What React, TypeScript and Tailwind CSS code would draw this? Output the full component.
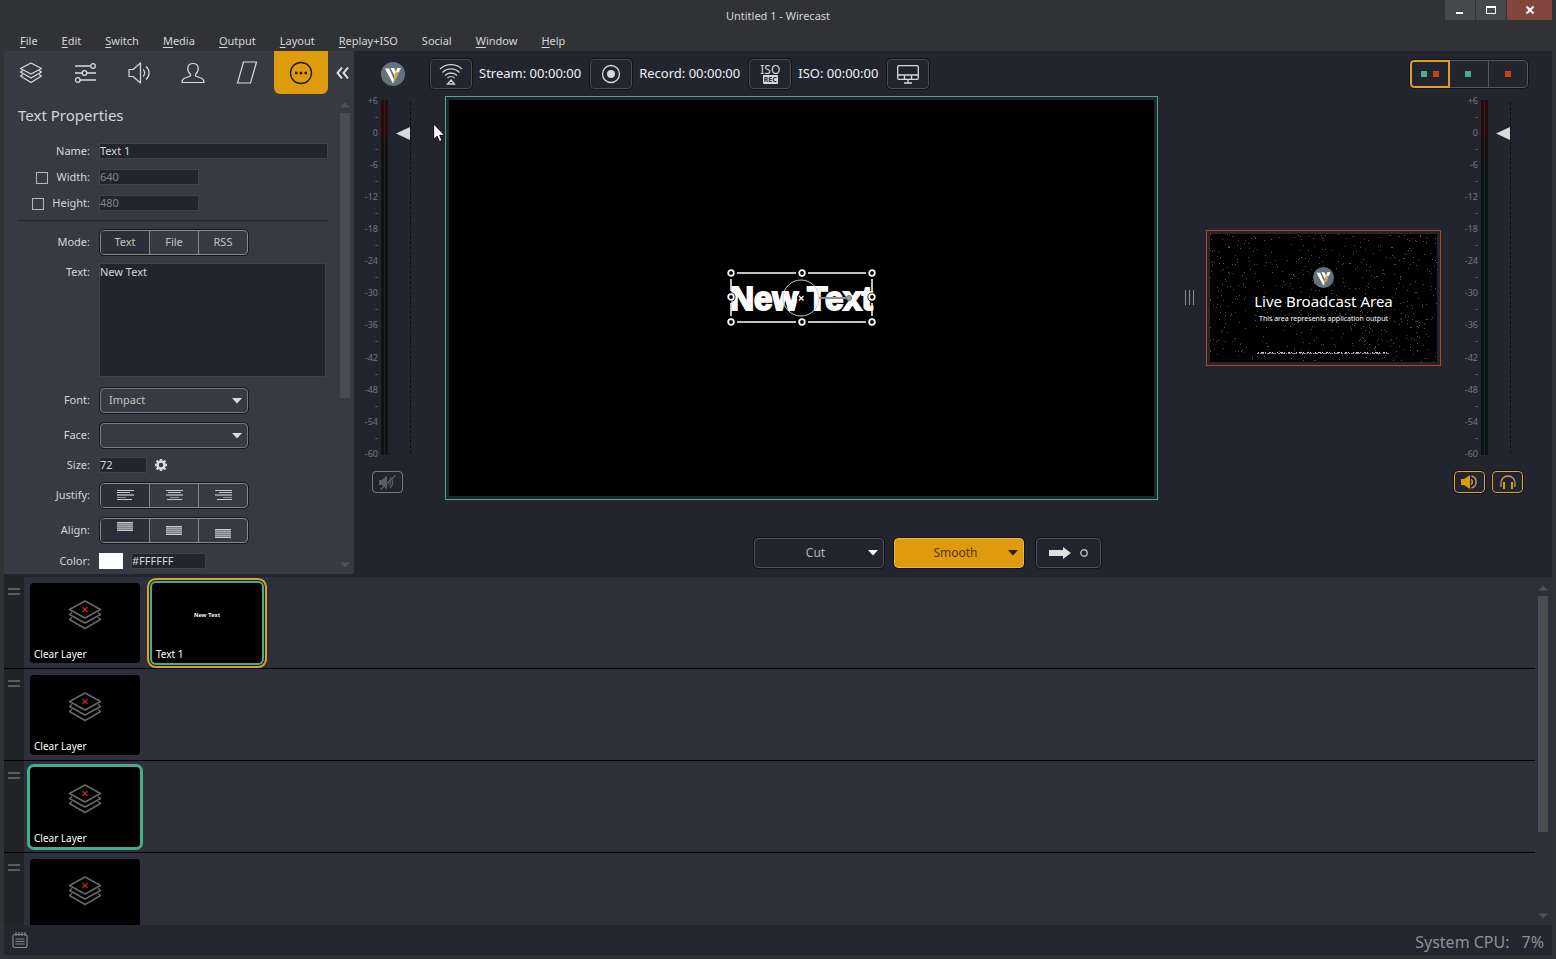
import React from "react";
import { clsx } from "clsx";

const menus = [
  { label: "File", key: true },
  { label: "Edit", key: true },
  { label: "Switch", key: true },
  { label: "Media", key: true },
  { label: "Output", key: true },
  { label: "Layout", key: true },
  { label: "Replay+ISO", key: true },
  { label: "Social", key: false },
  { label: "Window", key: true },
  { label: "Help", key: true },
];

const meterLabels = ["+6", "0", "-6", "-12", "-18", "-24", "-30", "-36", "-42", "-48", "-54", "-60"];

export default function App() {
  return (
    <div className="flex h-screen flex-col overflow-hidden bg-[#313235] px-1 pb-1 font-['Noto_Sans',sans-serif] text-[11px] text-[#d4d6d8]">
      <TitleBar />
      <MenuBar />
      <div className="flex shrink-0 bg-[#22252e]">
        <PropertiesPanel />
        <Stage />
      </div>
      <LayerList />
      <footer className="flex h-[30px] shrink-0 items-center justify-between bg-[#23262e] pr-2 pl-2">
        <button aria-label="Event log">
          <NotepadIcon />
        </button>
        <p className="flex gap-3 pt-1 text-base text-[#8e9095]">
          <span>System CPU:</span>
          <span>7%</span>
        </p>
      </footer>
    </div>
  );
}

function TitleBar() {
  return (
    <header className="grid h-[30px] shrink-0 grid-cols-[1fr_auto_1fr]">
      <span />
      <h1 className="self-center pt-[2px]">Untitled 1 - Wirecast</h1>
      <div className="flex h-5 justify-end gap-px">
        <button aria-label="Minimize" className="flex w-[30px] items-center justify-center bg-[#47484b]">
          <svg width="8" height="12">
            <rect x="0" y="8" width="7" height="2" fill="#fff" />
          </svg>
        </button>
        <button aria-label="Maximize" className="flex w-[30px] items-center justify-center bg-[#47484b]">
          <svg width="11" height="9">
            <path d="M.5 1.5h9v6h-9zM0 1h10" fill="none" stroke="#fff" />
            <path d="M0 1h10" stroke="#fff" strokeWidth="2" />
          </svg>
        </button>
        <button aria-label="Close" className="flex w-[45px] items-center justify-center bg-[#83463f]">
          <svg width="8" height="8">
            <path d="M.5 .5l7 7M7.5 .5l-7 7" stroke="#fff" strokeWidth="2" />
          </svg>
        </button>
      </div>
    </header>
  );
}

function MenuBar() {
  return (
    <nav className="flex h-[21px] shrink-0 items-center gap-6 pt-[2px] pl-4">
      {menus.map((menu) => (
        <button key={menu.label}>
          <span className={clsx(menu.key && "underline underline-offset-2")}>{menu.label[0]}</span>
          {menu.label.slice(1)}
        </button>
      ))}
    </nav>
  );
}

function PropertiesPanel() {
  const tabs = [
    { label: "Layers", icon: <LayersIcon /> },
    { label: "Adjustments", icon: <SlidersIcon /> },
    { label: "Audio", icon: <AudioIcon /> },
    { label: "Chroma key", icon: <PersonIcon /> },
    { label: "Position", icon: <SkewIcon /> },
    { label: "Shot properties", icon: <MoreIcon />, active: true },
  ];

  return (
    <aside className="mb-[3px] flex w-[350px] shrink-0 flex-col bg-[#373a43]">
      <div className="flex h-[43px]">
        {tabs.map((tab) => (
          <button
            key={tab.label}
            aria-label={tab.label}
            className={clsx("flex w-[54px] items-center justify-center", tab.active && "rounded-b-md bg-[#de9b0b]")}
          >
            {tab.icon}
          </button>
        ))}
        <button aria-label="Collapse panel" className="flex flex-1 items-center justify-center pl-[2px]">
          <svg width="13" height="12" fill="none" stroke="#d9dbd9" strokeWidth="2">
            <path d="M6 .5L1.500 6 6 11.500M12 .5L7.500 6 12 11.500" />
          </svg>
        </button>
      </div>
      <div className="flex flex-1">
        <form className="min-w-0 flex-1 pt-[9px]">
          <h2 className="mb-[11px] pl-[14px] text-[15px] leading-6">Text Properties</h2>
          <Field id="name" label="Name:">
            <TextBox id="name" value="Text 1" className="mr-3 flex-1" />
          </Field>
          <Field id="width" label="Width:" checkbox>
            <TextBox id="width" value="640" className="w-[100px] text-[#8b8188]" />
          </Field>
          <Field id="height" label="Height:" checkbox>
            <TextBox id="height" value="480" className="w-[100px] text-[#8b8188]" />
          </Field>
          <hr className="mt-1 mr-3 mb-2 ml-[14px] border-[#22252e]" />
          <Field label="Mode:">
            <Segmented
              items={[
                { label: "Text", content: "Text" },
                { label: "File", content: "File" },
                { label: "RSS", content: "RSS" },
              ]}
            />
          </Field>
          <div className="mt-2 flex gap-[9px]">
            <label htmlFor="text" className="w-[86px] text-right leading-[18px]">
              Text:
            </label>
            <textarea
              id="text"
              defaultValue="New Text"
              className="mr-[14px] h-[114px] flex-1 resize-none border border-[#414349] bg-[#22252d] leading-4 outline-none"
            />
          </div>
          <div className="mt-[10px]">
            <Field id="font" label="Font:">
              <Dropdown id="font" value="Impact" />
            </Field>
          </div>
          <div className="mt-[9px]">
            <Field id="face" label="Face:">
              <Dropdown id="face" value="" />
            </Field>
          </div>
          <div className="my-1">
            <Field id="size" label="Size:">
              <TextBox id="size" value="72" className="w-12" />
              <button type="button" aria-label="Size options" className="ml-2">
                <GearIcon />
              </button>
            </Field>
          </div>
          <Field label="Justify:">
            <Segmented
              items={[
                { label: "Justify left", content: <JustifyIcon rows={[[0, 17], [0, 13], [0, 17], [0, 9], [0, 15]]} /> },
                { label: "Justify center", content: <JustifyIcon rows={[[0, 17], [2, 13], [0, 17], [4, 9], [1, 15]]} /> },
                { label: "Justify right", content: <JustifyIcon rows={[[0, 17], [4, 13], [0, 17], [8, 9], [2, 15]]} /> },
              ]}
            />
          </Field>
          <div className="mt-[9px] mb-[5px]">
            <Field label="Align:">
              <Segmented
                items={[
                  { label: "Align top", content: <AlignIcon top={2} /> },
                  { label: "Align middle", content: <AlignIcon top={6} /> },
                  { label: "Align bottom", content: <AlignIcon top={9} /> },
                ]}
              />
            </Field>
          </div>
          <Field id="color" label="Color:">
            <button type="button" aria-label="Pick color" className="mr-2 h-4 w-6 bg-white" />
            <TextBox id="color" value="#FFFFFF" className="w-[75px]" />
          </Field>
        </form>
        <Scrollbar thumb="h-[285px]" />
      </div>
    </aside>
  );
}

function Field({
  id,
  label,
  checkbox,
  children,
}: {
  id?: string;
  label: string;
  checkbox?: boolean;
  children: React.ReactNode;
}) {
  return (
    <div className="flex h-[26px] items-center gap-[9px]">
      <div className="flex w-[86px] items-center justify-end gap-2">
        {checkbox && (
          <input
            type="checkbox"
            aria-label={`Lock ${label}`}
            className="mt-px size-3 appearance-none border border-[#b6b9b0]"
          />
        )}
        <label htmlFor={id}>{label}</label>
      </div>
      <div className="flex flex-1 items-center">{children}</div>
    </div>
  );
}

function TextBox({ id, value, className }: { id: string; value: string; className?: string }) {
  return (
    <input
      id={id}
      type="text"
      defaultValue={value}
      className={clsx("h-4 min-w-0 border border-[#414349] bg-[#22252d] outline-none", className)}
    />
  );
}

function Segmented({ items }: { items: { label: string; content: React.ReactNode }[] }) {
  return (
    <div className="ml-px flex h-[25px] w-[148px] divide-x divide-[#868987] overflow-hidden rounded border border-[#868987] text-[#c3c4bf] outline outline-[#15171c]">
      {items.map((item, i) => (
        <button
          key={item.label}
          type="button"
          aria-label={item.label}
          className={clsx("flex flex-1 items-center justify-center", i === 0 && "bg-[#2c2f39]")}
        >
          {item.content}
        </button>
      ))}
    </div>
  );
}

function Dropdown({ id, value }: { id: string; value: string }) {
  return (
    <div className="relative ml-px w-[148px]">
      <select
        id={id}
        defaultValue={value}
        className="block h-[25px] w-full appearance-none rounded border border-[#777a7f] bg-[#373a43] pl-2 text-[#c3c4bf] outline outline-[#15171c]"
      >
        <option>{value}</option>
      </select>
      <svg className="pointer-events-none absolute top-[10px] right-[6px]" width="10" height="6">
        <path d="M0 0h10L5 5.500z" fill="#d9dbd9" />
      </svg>
    </div>
  );
}

function Scrollbar({ thumb }: { thumb: string }) {
  return (
    <div className="flex w-[14px] shrink-0 flex-col pt-2 pb-[6px]">
      <svg width="10" height="6">
        <path d="M0 5.500h10L5 .5z" fill="#505257" />
      </svg>
      <div className={clsx("mt-[5px] w-[10px] bg-[#4b4c4f]", thumb)} />
      <svg className="mt-auto" width="10" height="6">
        <path d="M0 .5h10L5 5.500z" fill="#505257" />
      </svg>
    </div>
  );
}

function Stage() {
  return (
    <main className="min-w-0 flex-1 pt-2 pb-[9px]">
      <div className="flex items-center pr-6 pl-[27px] text-[13px] text-[#f0f1f2]">
        <Logo size={24} />
        <ToolButton label="Stream" className="ml-[25px]">
          <WifiIcon />
        </ToolButton>
        <span className="mr-[9px] ml-[7px]">Stream: 00:00:00</span>
        <ToolButton label="Record">
          <svg width="20" height="20" fill="none" stroke="#d6d9d9">
            <circle cx="10" cy="10" r="8.500" strokeWidth="1.300" />
            <circle cx="10" cy="10" r="4" fill="#d6d9d9" stroke="none" />
          </svg>
        </ToolButton>
        <span className="mr-[9px] ml-[7px]">Record: 00:00:00</span>
        <ToolButton label="ISO record">
          <span className="flex flex-col items-center">
            <span className="text-[12px] leading-[11px] text-[#d6d9d9]">ISO</span>
            <span className="rounded-[1px] bg-[#d6d9d9] px-px text-[7px] leading-[9px] font-bold text-[#22252e]">REC</span>
          </span>
        </ToolButton>
        <span className="mr-[9px] ml-[7px]">ISO: 00:00:00</span>
        <ToolButton label="Output display">
          <MonitorIcon />
        </ToolButton>
        <div className="ml-auto flex h-7 w-[118px] rounded border border-[#55585a] outline outline-[#121419]">
          <button
            aria-label="Preview and live"
            className="-m-px flex w-[40px] items-center justify-center gap-[6px] rounded-l border-2 border-[#d9a227]"
          >
            <span className="size-[6px] bg-[#47ad8b]" />
            <span className="size-[6px] bg-[#d33d13]" />
          </button>
          <button aria-label="Preview only" className="flex flex-1 items-center justify-center border-r border-[#55585a]">
            <span className="size-[6px] bg-[#47ad8b]" />
          </button>
          <button aria-label="Live only" className="flex flex-1 items-center justify-center">
            <span className="size-[6px] bg-[#d33d13]" />
          </button>
        </div>
      </div>

      <div className="mt-[7px] flex">
        <div className="w-[57px] shrink-0">
          <Meter />
          <button
            aria-label="Mute preview"
            className="mt-3 ml-[18px] flex h-[22px] w-[31px] items-center justify-center rounded border border-[#777a7d]"
          >
            <MutedIcon />
          </button>
        </div>
        <div className="relative w-[34px] shrink-0">
          <svg className="absolute top-[27px] left-[22px]" width="13" height="20">
            <path
              d="M.7 .9v15.500l3.500-3.200 2.300 5.300 2.500-1-2.300-5.200h4.800z"
              fill="#fff"
              stroke="#000"
              strokeWidth=".9"
            />
          </svg>
        </div>
        <PreviewCanvas />
        <div className="flex w-12 shrink-0 items-center pl-[27px]">
          <svg width="10" height="16">
            <path d="M.5 0v15M4.500 0v15M8.500 0v15" stroke="#8a8d8d" />
          </svg>
        </div>
        <LiveCanvas />
        <div className="ml-[13px] w-[98px] shrink-0">
          <Meter />
          <div className="mt-3 flex gap-[7px]">
            <button
              aria-label="Live volume"
              className="flex h-[22px] w-[31px] items-center justify-center rounded border border-[#d9a63d] outline outline-[#0f1013]"
            >
              <svg width="17" height="14" fill="none" stroke="#c99a5a">
                <path d="M0 4h3l6-4v14L3 10H0z" fill="#de9b0b" stroke="none" />
                <path d="M10 4.500a3 3 0 0 1 0 5M10.500 1a6.200 6.200 0 0 1 0 12" strokeWidth="1.400" />
              </svg>
            </button>
            <button
              aria-label="Headphones"
              className="flex h-[22px] w-[31px] items-center justify-center rounded border border-[#d9a63d] outline outline-[#0f1013]"
            >
              <svg width="16" height="14" fill="none" stroke="#c99a5a">
                <path d="M1 12V8a7 7 0 0 1 14 0v4" strokeWidth="1.300" />
                <path d="M4 7v7M12 7v7" stroke="#de9b0b" strokeWidth="2" />
              </svg>
            </button>
          </div>
        </div>
      </div>

      <div className="mt-[38px] flex justify-center gap-[10px] pr-[51px]">
        <button className="flex h-[30px] w-[130px] items-center rounded border border-[#4f5254] pr-[5px] pl-2 text-xs text-[#b9b6b2] outline outline-[#101216]">
          <span className="flex-1">Cut</span>
          <svg width="10" height="6">
            <path d="M0 0h10L5 5.500z" fill="#fff" />
          </svg>
        </button>
        <button className="flex h-[30px] w-[130px] items-center rounded border border-[#e5b75a] bg-[#de9b0b] pr-[5px] pl-2 text-xs text-[#57350a] outline outline-[#101216]">
          <span className="flex-1">Smooth</span>
          <svg width="10" height="6">
            <path d="M0 0h10L5 5.500z" fill="#2a2410" />
          </svg>
        </button>
        <button
          aria-label="Go"
          className="ml-[2px] flex h-[30px] w-[65px] items-center justify-center gap-[9px] rounded border border-[#4f5254] outline outline-[#101216]"
        >
          <svg width="22" height="12">
            <path d="M0 3h14V0l8 6-8 6V9H0z" fill="#dfe1e1" />
          </svg>
          <svg width="8" height="8">
            <circle cx="4" cy="4" r="3.200" fill="none" stroke="#b5b8b8" strokeWidth="1.400" />
          </svg>
        </button>
      </div>
    </main>
  );
}

function ToolButton({
  label,
  className,
  children,
}: {
  label: string;
  className?: string;
  children: React.ReactNode;
}) {
  return (
    <button
      aria-label={label}
      className={clsx(
        "flex h-[30px] w-[42px] items-center justify-center rounded border border-[#4a4c4e] outline outline-[#101216]",
        className
      )}
    >
      {children}
    </button>
  );
}

function Meter() {
  return (
    <div className="flex h-[363px]">
      <div className="flex w-6 flex-col justify-between text-right text-[9px] leading-[10px] text-[#74767b]">
        {meterLabels.map((label, i) => (
          <React.Fragment key={label}>
            {i > 0 && <span>-</span>}
            <span>{label}</span>
          </React.Fragment>
        ))}
      </div>
      <div className="my-1 ml-[3px] flex w-[7px] gap-px">
        <MeterBar />
        <MeterBar />
      </div>
      <svg className="mt-[31px] ml-2" width="14" height="14">
        <path d="M14 0v13L0 6.500z" fill="#d9dcdd" />
      </svg>
      <div className="my-[6px] border-r border-dashed border-[#0c0d10]" />
    </div>
  );
}

function MeterBar() {
  return (
    <div className="flex flex-1 flex-col">
      <div className="h-[38px] bg-[#2a0a07]" />
      <div className="h-6 bg-[#150f0d]" />
      <div className="flex-1 bg-[#0a1413]" />
    </div>
  );
}

function PreviewCanvas() {
  const handles = [
    [5, 5],
    [76, 5],
    [146, 5],
    [5, 29],
    [146, 29],
    [5, 54],
    [76, 54],
    [146, 54],
  ];

  return (
    <section className="flex aspect-[713/404] min-w-0 flex-1 border border-[#50a58e] p-[3px]">
      <div className="flex flex-1 items-center justify-center bg-black">
        <div className="relative flex h-[60px] w-[152px] items-center justify-center">
          <span className="font-['Impact','Liberation_Sans_Narrow','Liberation_Sans',sans-serif] text-[33px] leading-none font-bold whitespace-nowrap text-[#fcfcfc] [-webkit-text-stroke:2px_#fcfcfc]">
            New Text
          </span>
          <svg className="absolute inset-0" width="152" height="60" fill="none" stroke="#fff">
            <path d="M11 5h59M82 5h58M11 54h59M82 54h58" strokeWidth="1.500" />
            <path d="M5 11v12M5 35v13M146 11v12M146 35v13" strokeWidth="1.500" />
            <circle cx="75" cy="30" r="18" stroke="#c9cccc" />
            <path d="M93 30h28" stroke="#8c9090" strokeWidth="2" />
            <circle cx="123" cy="30" r="2.500" fill="#a0a4a4" stroke="#6c7070" />
            <circle cx="75.500" cy="30" r="4.500" fill="#000" stroke="none" />
            <path d="M73 28l4.500 4.500M77.500 28L73 32.500" strokeWidth="1.200" />
            {handles.map(([x, y]) => (
              <g key={`${x}-${y}`}>
                <circle cx={x} cy={y} r="4.500" fill="#000" stroke="none" />
                <circle cx={x} cy={y} r="2.800" fill="#000" strokeWidth="1.800" />
              </g>
            ))}
          </svg>
        </div>
      </div>
    </section>
  );
}

// fixed scatter of dim pixels behind the live slate
const noise = (() => {
  let seed = 7;
  const next = () => {
    seed = (seed * 16807) % 2147483647;
    return seed / 2147483647;
  };
  let d = "";
  for (let i = 0; i < 620; i++) {
    d += `M${Math.floor(next() * 227)} ${Math.floor(next() * 128)}h1v1h-1z`;
  }
  return d;
})();

function LiveCanvas() {
  return (
    <section className="h-[136px] w-[235px] shrink-0 self-center border border-[#b9431f] p-[3px]">
      <div className="relative h-full overflow-hidden bg-black">
        <svg className="absolute inset-0" width="227" height="128">
          <path d={noise} fill="#4a4f50" />
          <path d="M47 119.500h132" stroke="#8d8f8f" strokeDasharray="2 1 4 1 1 1 3 1 5 2" />
          <path d="M48 118.500h132" stroke="#c8caca" strokeDasharray="1 2 3 1 1 3 2 1 1 4" />
        </svg>
        <div className="relative flex flex-col items-center pt-[33px] text-white">
          <Logo size={21} />
          <p className="mt-1 text-[15px] leading-[18px]">Live Broadcast Area</p>
          <p className="mt-1 text-[7px] leading-[10px]">This area represents application output</p>
        </div>
      </div>
    </section>
  );
}

function LayerList() {
  return (
    <section className="flex min-h-0 flex-1 bg-[#2d2f3a]">
      <div className="min-w-0 flex-1 overflow-hidden">
        <LayerRow label="Clear Layer" textShot />
        <LayerRow label="Clear Layer" />
        <LayerRow label="Clear Layer" live />
        <LayerRow />
      </div>
      <div className="flex pl-[3px]">
        <Scrollbar thumb="h-[236px]" />
      </div>
    </section>
  );
}

function LayerRow({ label, textShot, live }: { label?: string; textShot?: boolean; live?: boolean }) {
  return (
    <div className="flex h-[92px] border-b border-black">
      <div className="flex w-5 justify-center bg-[#222326] pt-[11px]">
        <svg width="12" height="8">
          <path d="M0 1h12M0 6h12" stroke="#5a5c5e" strokeWidth="2" />
        </svg>
      </div>
      <div className="flex gap-3 pt-[6px] pl-[6px] text-[10px] text-white">
        <button
          aria-label="Clear Layer"
          className={clsx(
            "flex h-20 w-[110px] flex-col items-center justify-between rounded bg-black pt-[17px]",
            live && "ring-3 ring-[#43ae8b]"
          )}
        >
          <ClearLayerIcon />
          {label && <span className="self-start pl-1 leading-[18px]">{label}</span>}
        </button>
        {textShot && (
          <button className="flex h-20 w-[110px] flex-col items-center justify-between rounded bg-black pt-[27px] shadow-[0_0_0_2px_#43ae8b,0_0_0_3px_#1c1d22,0_0_0_5px_#d9a227]">
            <span className="font-['Impact','Liberation_Sans_Narrow','Liberation_Sans',sans-serif] text-[6px] leading-[10px] font-bold">
              New Text
            </span>
            <span className="self-start pl-1 leading-[18px]">Text 1</span>
          </button>
        )}
      </div>
    </div>
  );
}

function Logo({ size }: { size: number }) {
  return (
    <svg width={size} height={size} viewBox="0 0 24 24">
      <circle cx="12" cy="12" r="12" fill="#66717f" />
      <path d="M4 6.500h4l5.500 12-1.500 3z" fill="#fff" />
      <path d="M9.500 6h3.500l3.500 7-1.500 3.500z" fill="#fff" />
      <path d="M12 21.500l2-11 2 3.500z" fill="#dba43a" />
      <path d="M16.500 6H20l-5.500 11-1-3.500z" fill="#dba43a" />
      <path d="M16.500 6H20l-2.500 4.500-2.500-1z" fill="#fff" />
    </svg>
  );
}

function LayersIcon() {
  return (
    <svg width="24" height="22" fill="none" stroke="#d9dbd6" strokeWidth="1.300" strokeLinejoin="round">
      <path d="M12 1l10.500 5.500L12 12 1.500 6.500z" />
      <path d="M4 8.500l-2.500 1.500L12 16l10.500-6L20 8.500" />
      <path d="M4 12.500L1.500 14 12 20.500 22.500 14 20 12.500" />
    </svg>
  );
}

function SlidersIcon() {
  return (
    <svg width="21" height="20" fill="none" stroke="#d9dbd6" strokeWidth="1.300">
      <path d="M0 3h15.500M0 10h7M12 10h9M5 17h16" />
      <circle cx="18" cy="3" r="2.300" />
      <circle cx="9.500" cy="10" r="2.300" />
      <circle cx="2.800" cy="17" r="2.300" />
    </svg>
  );
}

function AudioIcon() {
  return (
    <svg width="22" height="22" fill="none" stroke="#d9dbd6" strokeWidth="1.200" strokeLinejoin="round">
      <path d="M1 7.500h4L12.500 1v20L5 14.500H1z" />
      <path d="M15 7.500a4.500 4.500 0 0 1 0 7M18 4.500a8.500 8.500 0 0 1 0 13" />
    </svg>
  );
}

function PersonIcon() {
  return (
    <svg width="24" height="22" fill="none" stroke="#d9dbd6" strokeWidth="1.200" strokeLinejoin="round">
      <path d="M9.500 12.500c-2-2-3-4-2.700-6.500C7 3 9 1.500 12 1.500S17 3 17.200 6c.2 2.500-.7 4.500-2.700 6.500v1.500l6 2.200c1.800.7 2.500 1.800 2.500 4.300H1c0-2.500.7-3.600 2.500-4.300l6-2.200z" />
    </svg>
  );
}

function SkewIcon() {
  return (
    <svg width="22" height="23" fill="none" stroke="#d9dbd6" strokeWidth="1.200">
      <path d="M7.500 1h13l-6 21h-13z" />
    </svg>
  );
}

function MoreIcon() {
  return (
    <svg width="24" height="24" fill="none" stroke="#1d1a12">
      <circle cx="12" cy="12" r="10.500" strokeWidth="1.300" />
      <path d="M6 12h2.500M10.800 12h2.500M15.500 12H18" strokeWidth="2.500" />
    </svg>
  );
}

function GearIcon() {
  return (
    <svg width="12" height="12" viewBox="0 0 12 12" fill="none" stroke="#d9dcd9">
      <circle cx="6" cy="6" r="3.500" strokeWidth="2.600" />
      <path d="M6 0v1.800M6 10.200V12M0 6h1.800M10.200 6H12M1.600 1.600l1.400 1.400M9 9l1.400 1.400M1.600 10.400L3 9M9 3l1.400-1.400" strokeWidth="2.400" />
    </svg>
  );
}

function JustifyIcon({ rows }: { rows: number[][] }) {
  const tops = [0, 2, 4, 7, 9];

  return (
    <svg width="17" height="10">
      {rows.map(([x, w], i) => (
        <rect
          key={i}
          x={x}
          y={tops[i]}
          width={w}
          height={i === 2 ? 2 : 1}
          fill={i === 2 || i === 3 ? "#8e9091" : "#c9ccc9"}
        />
      ))}
    </svg>
  );
}

function AlignIcon({ top }: { top: number }) {
  return (
    <svg width="16" height="22">
      <rect x="0" y={top + 2} width="16" height="7" fill="#7e8085" />
      {[0, 2, 4, 6, 8].map((y) => (
        <rect key={y} x="0" y={top + y + 1} width="16" height="1" fill={y === 0 || y === 8 ? "#c9ccc9" : "#a3a5a7"} />
      ))}
    </svg>
  );
}

function WifiIcon() {
  return (
    <svg width="24" height="21" fill="none" stroke="#cfd2d2" strokeWidth="1.300">
      <path d="M1 5a16 16 0 0 1 22 0M3.500 8.500a12 12 0 0 1 17 0M6 11.500a8.500 8.500 0 0 1 12 0M8.500 14a5 5 0 0 1 7 0" />
      <path d="M12 16l3.500 4h-7z" />
    </svg>
  );
}

function MonitorIcon() {
  return (
    <svg width="22" height="19" fill="none" stroke="#d6d9d9" strokeWidth="1.300">
      <rect x=".7" y=".7" width="20.600" height="13.600" rx="1" />
      <path d="M1 10h20M7.500 10v4M14.500 10v4M11 14.500V18M7 18h8" />
    </svg>
  );
}

function MutedIcon() {
  return (
    <svg width="17" height="15" fill="none" stroke="#5b5e60">
      <path d="M0 5h3l5-4.500v14L3 10H0z" fill="#5b5e60" stroke="none" />
      <path d="M10 4.500a4 4 0 0 1 0 6M11 2a7 7 0 0 1 0 11" strokeWidth="1.300" />
      <path d="M16.500 .5L1.500 14.500" strokeWidth="1.300" />
    </svg>
  );
}

function ClearLayerIcon() {
  return (
    <svg width="34" height="30" fill="none" stroke="#66696c" strokeWidth="1.500" strokeLinejoin="round">
      <path d="M17 1l15.500 8.500L17 18 1.500 9.500z" />
      <path d="M4 12.500l-2.500 2L17 23l15.500-8.500-2.500-2M4 17.500l-2.500 2L17 28.500l15.500-9-2.500-2" />
      <path d="M14.500 7l5 5M19.500 7l-5 5" stroke="#b3261c" />
    </svg>
  );
}

function NotepadIcon() {
  return (
    <svg width="16" height="17" fill="none" stroke="#84878a" strokeWidth="1.200">
      <rect x="1" y="2.500" width="14" height="13" rx="2" />
      <path d="M4 0v4M7 0v4M10 0v4M13 0v4" />
      <path d="M3.500 7h9M3.500 9.500h9M3.500 12h9" />
    </svg>
  );
}
